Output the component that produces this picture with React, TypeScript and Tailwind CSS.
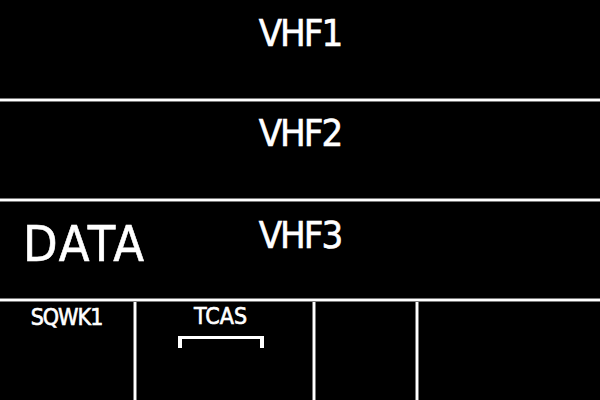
const font = { fontFamily: '"DejaVu Sans Condensed", "DejaVu Sans", sans-serif' };

function HLine() {
  return <div className="h-[4px] shrink-0 border-y border-[#7a7a7a] bg-white" />;
}

function VLine() {
  return <div className="w-[4px] shrink-0 border-x border-[#7a7a7a] bg-white" />;
}

export default function App() {
  return (
    <div
      className="flex h-[400px] w-[600px] flex-col overflow-hidden bg-black text-white [-webkit-text-stroke:0.6px_white]"
      style={{ ...font, fontStretch: 'condensed' }}
    >
      <div className="flex h-[98px] shrink-0 justify-center pt-[14px]">
        <span className="text-[38px] leading-[38px] tracking-[-2px]">VHF1</span>
      </div>
      <HLine />
      <div className="flex h-[96px] shrink-0 justify-center pt-[12px]">
        <span className="text-[38px] leading-[38px] tracking-[-2px]">VHF2</span>
      </div>
      <HLine />
      <div className="grid h-[96px] shrink-0 grid-cols-[1fr_auto_1fr]">
        <div className="pl-[23px] pt-[17px]">
          <span className="text-[50px] leading-[50px] tracking-[2px]">DATA</span>
        </div>
        <div className="pt-[14px]">
          <span className="text-[38px] leading-[38px] tracking-[-2px]">VHF3</span>
        </div>
        <div />
      </div>
      <HLine />
      <div className="flex flex-1">
        <div className="flex w-[133px] shrink-0 justify-center pt-[4px]">
          <span className="text-[23px] leading-[23px] tracking-[-1px]">SQWK1</span>
        </div>
        <VLine />
        <div className="flex w-[175px] shrink-0 flex-col items-center pr-[8px] pt-[3px]">
          <span className="text-[23px] leading-[23px]">TCAS</span>
          <div className="mt-[8px] h-[12px] w-[86px] border-x-[4px] border-t-[3px] border-white" />
        </div>
        <VLine />
        <div className="w-[99px] shrink-0" />
        <VLine />
        <div className="flex-1" />
      </div>
    </div>
  );
}
